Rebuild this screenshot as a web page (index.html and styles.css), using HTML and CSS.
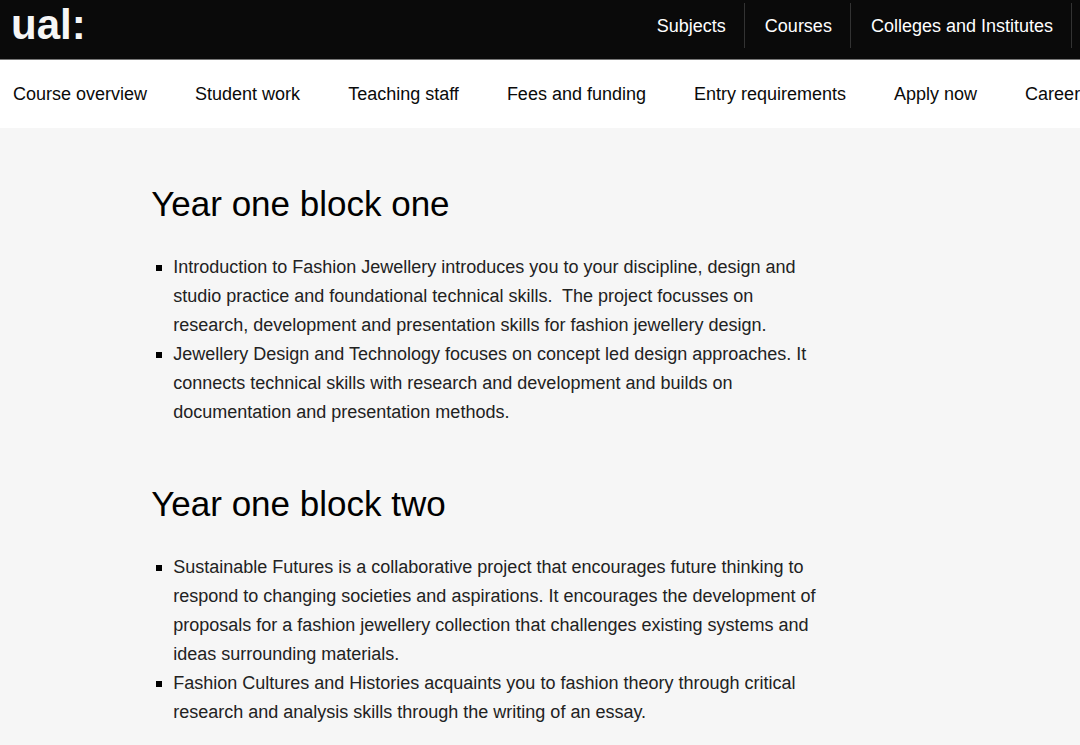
FILE: index.html
```html
<!DOCTYPE html>
<html lang="en">
<head>
<meta charset="utf-8">
<meta name="viewport" content="width=device-width, initial-scale=1">
<title>Course overview</title>
<link rel="stylesheet" href="styles.css">
</head>
<body>
  <header class="header">
    <a href="#" class="logo">ual:</a>
    <nav class="main-nav">
      <a href="#">Subjects</a>
      <a href="#">Courses</a>
      <a href="#">Colleges and Institutes</a>
    </nav>
  </header>

  <nav class="sub-nav">
    <a href="#">Course overview</a>
    <a href="#">Student work</a>
    <a href="#">Teaching staff</a>
    <a href="#">Fees and funding</a>
    <a href="#">Entry requirements</a>
    <a href="#">Apply now</a>
    <a href="#">Careers</a>
  </nav>

  <main class="content">
    <section class="block">
      <h2>Year one block one</h2>
      <ul>
        <li>Introduction to Fashion Jewellery introduces you to your discipline, design and studio practice and foundational technical skills.&nbsp; The project focusses on research, development and presentation skills for fashion jewellery design.</li>
        <li>Jewellery Design and Technology focuses on concept led design approaches. It connects technical skills with research and development and builds on documentation and presentation methods.</li>
      </ul>
    </section>

    <section class="block">
      <h2>Year one block two</h2>
      <ul>
        <li>Sustainable Futures is a collaborative project that encourages future thinking to respond to changing societies and aspirations. It encourages the development of proposals for a fashion jewellery collection that challenges existing systems and ideas surrounding materials.</li>
        <li>Fashion Cultures and Histories acquaints you to fashion theory through critical research and analysis skills through the writing of an essay.</li>
      </ul>
    </section>
  </main>
</body>
</html>
```
FILE: styles.css
```css
* {
  box-sizing: border-box;
}

body {
  margin: 0;
  background: #f6f6f6;
  color: #0a0a0a;
  font-family: "Liberation Sans", Arial, sans-serif;
  font-size: 18px;
}

a {
  color: inherit;
  text-decoration: none;
}

/* Black bar with the logo and main links */
.header {
  display: flex;
  justify-content: space-between;
  height: 60px;
  padding: 3px 8px 0 11px;
  background: #0a0a0a;
  border-bottom: 1px solid #777;
  color: #fff;
}

.logo {
  font-size: 42px;
  font-weight: bold;
  line-height: 44px;
  color: #f6f6f6;
}

.main-nav {
  display: flex;
  height: 45px;
}

.main-nav a {
  padding: 0 18px 0 20px;
  border-right: 1px solid #333;
  line-height: 46px;
}

/* Course page links, cut off at the window edge */
.sub-nav {
  display: flex;
  gap: 48px;
  padding: 0 13px;
  background: #fff;
  line-height: 68px;
  white-space: nowrap;
  overflow: hidden;
}

/* Course text */
.content {
  margin-left: 14%;
  padding: 54px 16px 0 0;
}

.block {
  max-width: 676px;
  margin-bottom: 55px;
}

.block h2 {
  margin: 0 0 27px;
  font-size: 35px;
  font-weight: normal;
  line-height: 44px;
  color: #000;
}

.block ul {
  margin: 0;
  padding: 0 0 0 22px;
  list-style: none;
}

.block li {
  position: relative;
  color: #222;
  line-height: 29px;
}

/* Square bullets */
.block li::before {
  content: "";
  position: absolute;
  top: 12px;
  left: -17px;
  width: 6px;
  height: 6px;
  background: #000;
}
```
